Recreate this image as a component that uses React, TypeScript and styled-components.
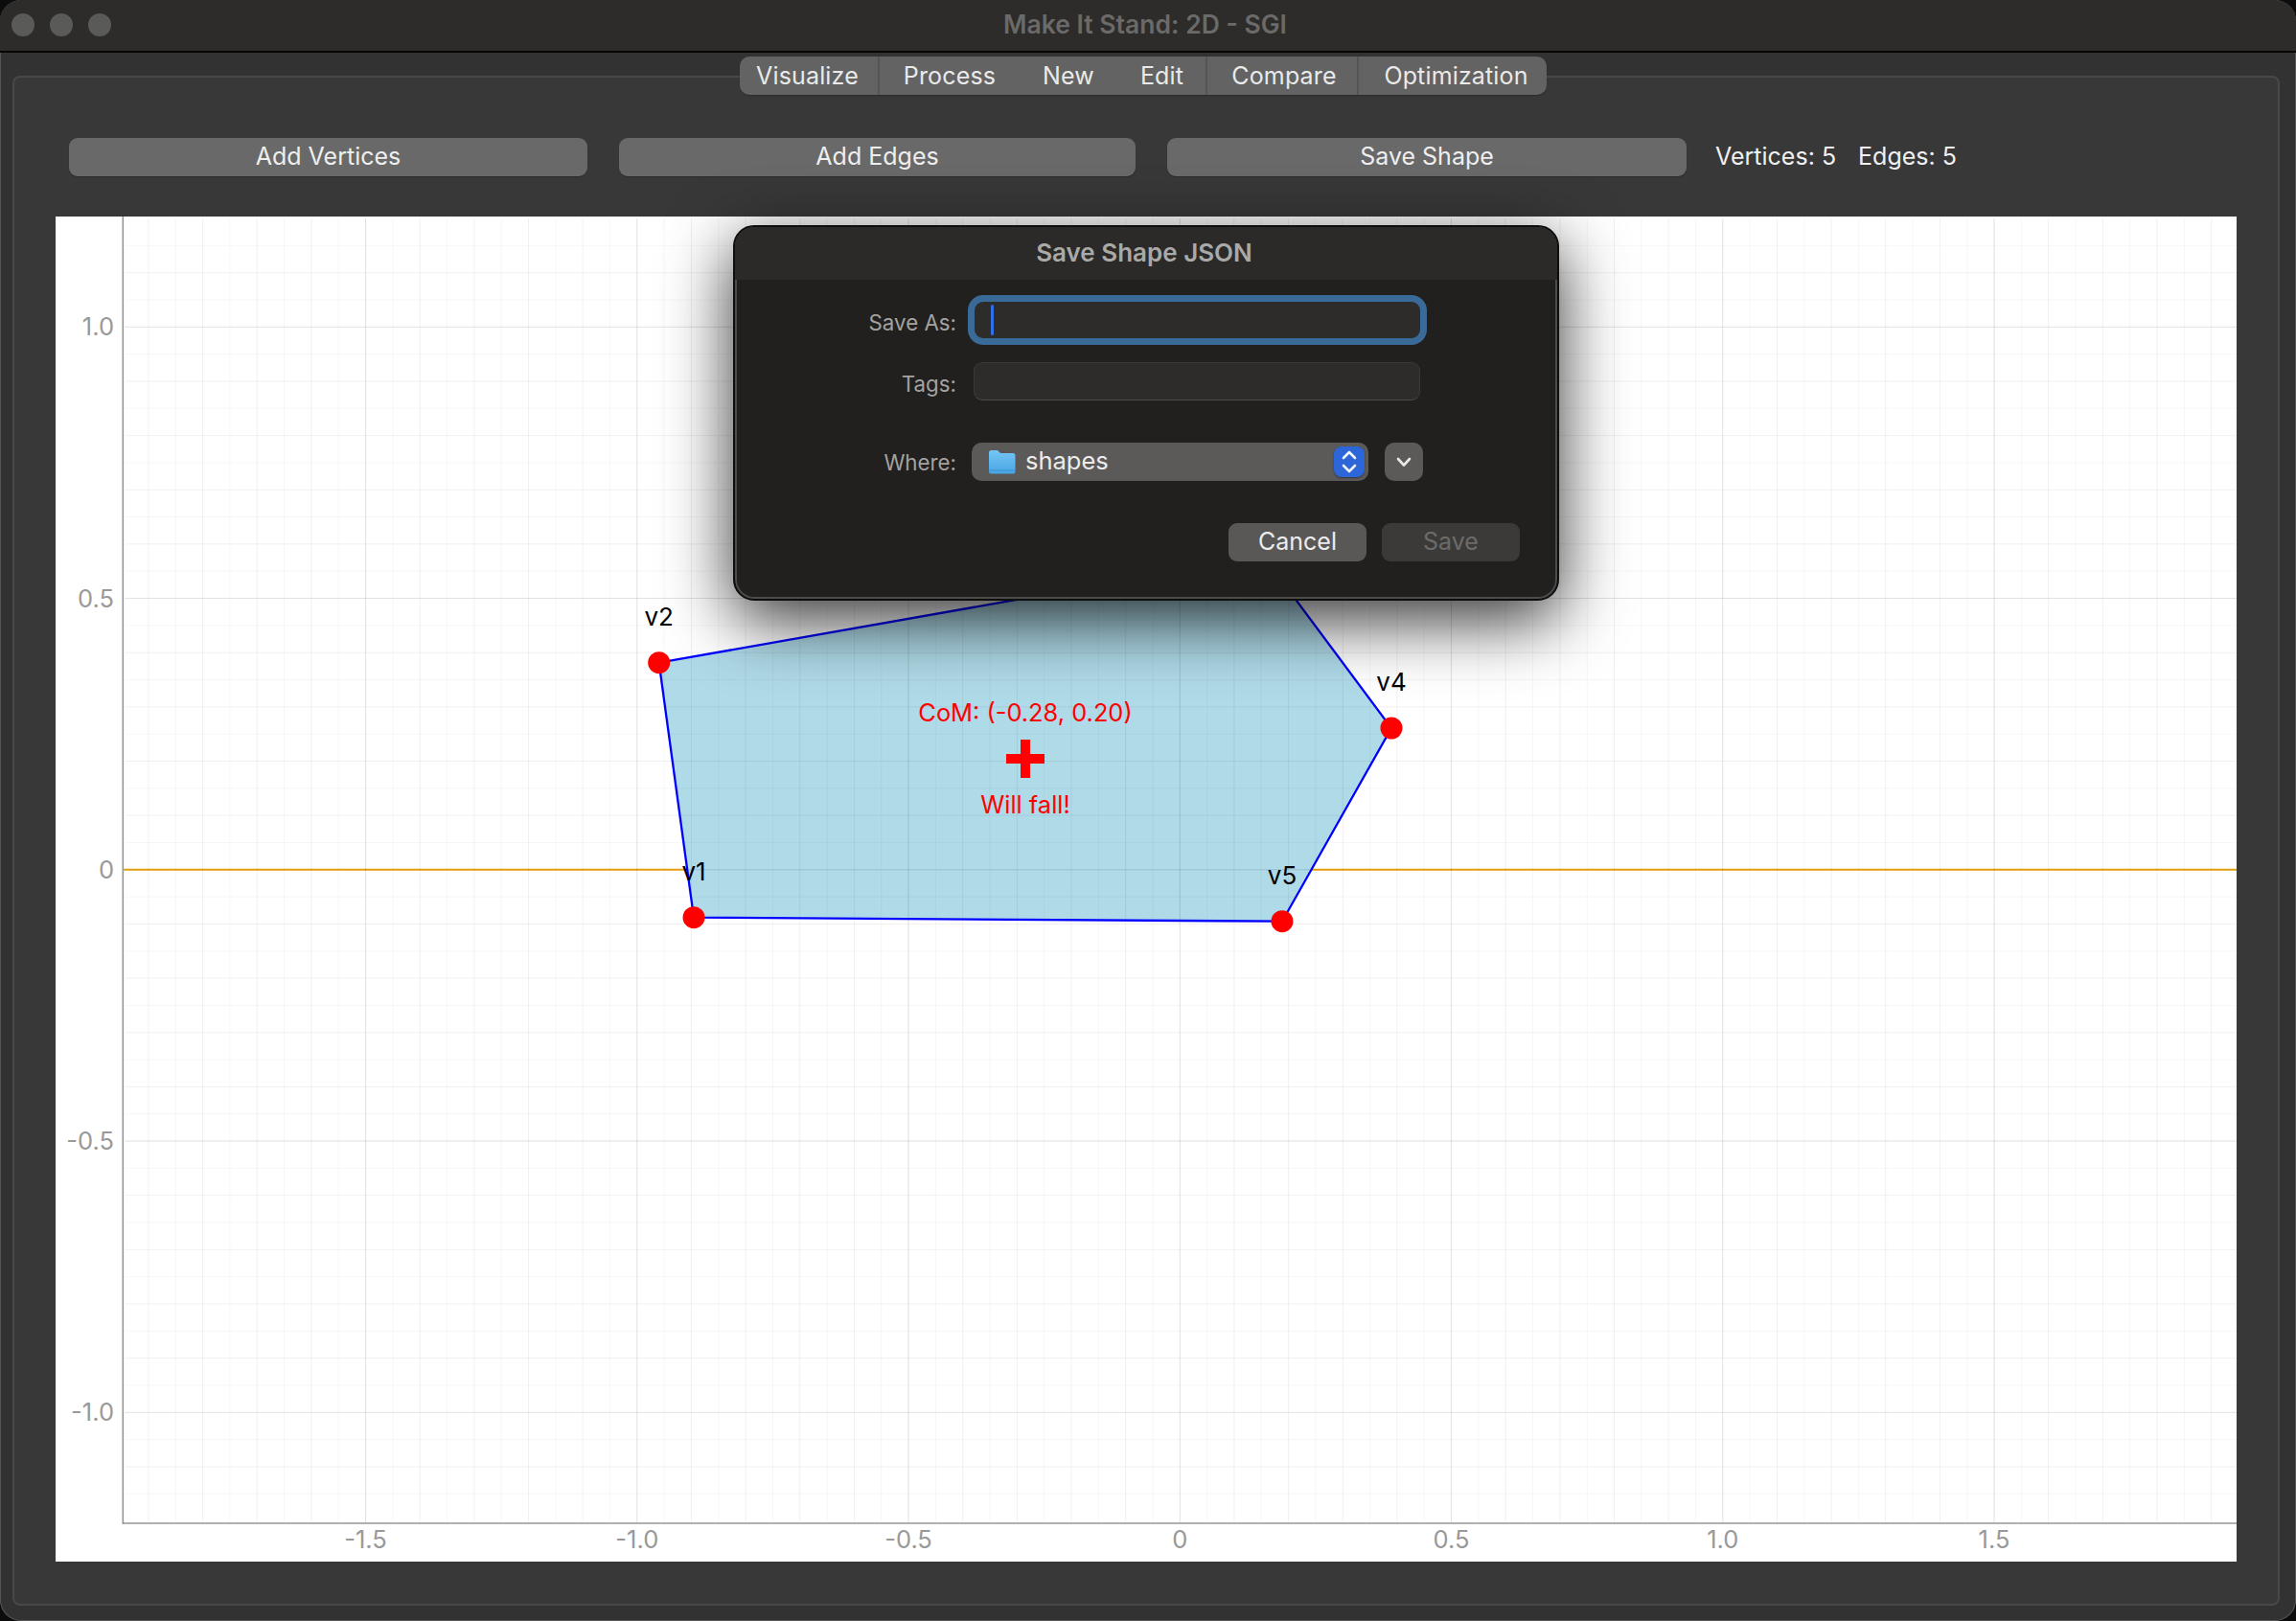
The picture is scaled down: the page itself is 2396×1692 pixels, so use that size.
import React from 'react';
import styled, { createGlobalStyle } from 'styled-components';

const FONT = '"Inter", "Liberation Sans", sans-serif';

const GlobalStyle = createGlobalStyle`
  html, body {
    margin: 0;
    padding: 0;
    background: #0c0c0c;
  }
  #root {
    width: 2396px;
    height: 1692px;
  }
`;

const Window = styled.div`
  position: relative;
  width: 2396px;
  height: 1692px;
  box-sizing: border-box;
  display: flex;
  flex-direction: column;
  overflow: hidden;
  background: #323232;
  border-radius: 22px;
  box-shadow: inset 0 0 0 1px #555;
  font-family: ${FONT};
`;

const TitleBar = styled.div`
  position: relative;
  flex: 0 0 55px;
  box-sizing: border-box;
  display: flex;
  align-items: center;
  gap: 16px;
  padding: 0 0 1px 12px;
  background: #2d2c2a;
  border-bottom: 2px solid #050505;
`;

const Light = styled.span`
  width: 24px;
  height: 24px;
  border-radius: 50%;
  background: #5a5a58;
`;

const WindowTitle = styled.div`
  position: absolute;
  left: 0;
  right: 6px;
  top: 10px;
  text-align: center;
  color: #6a6a68;
  font-size: 26.5px;
  font-weight: 600;
  line-height: 30px;
`;

const Group = styled.div`
  margin: 24px 17px 0 13px;
  height: 1597px;
  box-sizing: border-box;
  display: flex;
  flex-direction: column;
  padding: 0 44px 0 43px;
  background: #383838;
  border: 2px solid #484848;
  border-radius: 8px;
`;

const TabBar = styled.div`
  position: relative;
  display: flex;
  align-self: flex-start;
  margin: -22px 0 0 714px;
  height: 40px;
  width: 842px;
  box-sizing: border-box;
  background: #636363;
  border-radius: 10px;
  box-shadow: 0 1px 1px rgba(0, 0, 0, 0.25);
`;

const Tab = styled.div<{ $width: number; $divider?: boolean; $left?: number; $right?: number }>`
  width: ${p => p.$width}px;
  box-sizing: border-box;
  display: flex;
  align-items: center;
  justify-content: center;
  padding: 0 ${p => p.$right ?? 0}px 0 ${p => p.$left ?? 0}px;
  color: #eaeaea;
  font-size: 25px;
  letter-spacing: 0.15px;
  border-right: ${p => (p.$divider ? '2px solid #555' : 'none')};
`;

const Toolbar = styled.div`
  display: flex;
  align-items: center;
  gap: 33px;
  margin: 45px 0 0 14px;
  height: 40px;
`;

const ToolButton = styled.button<{ $width: number }>`
  width: ${p => p.$width}px;
  height: 40px;
  padding: 0 0 3px;
  border: none;
  border-radius: 9px;
  background: #696969;
  color: #eee;
  font-family: ${FONT};
  font-size: 25px;
  box-shadow: 0 1px 1px rgba(0, 0, 0, 0.25);
`;

const Counts = styled.div`
  display: flex;
  gap: 23px;
  margin: 0 0 3px -3px;
  color: #f0f0f0;
  font-size: 25px;
`;

const Plot = styled.div`
  margin-top: 42px;
  width: 2276px;
  height: 1404px;
  background: #fff;
`;

const ChartSvg = styled.svg`
  display: block;
  width: 100%;
  height: 100%;
  font-family: ${FONT};
`;

const Dialog = styled.div`
  position: absolute;
  left: 765px;
  top: 235px;
  width: 862px;
  height: 392px;
  box-sizing: border-box;
  display: flex;
  flex-direction: column;
  background: #21201e;
  border: 2px solid #0e0e0e;
  border-radius: 22px;
  overflow: hidden;
  box-shadow: inset 0 0 0 2px #4c4c4a, 0 20px 70px rgba(0, 0, 0, 0.8);
`;

const DialogTitle = styled.div`
  flex: 0 0 55px;
  box-sizing: border-box;
  display: flex;
  align-items: center;
  justify-content: center;
  padding: 0 4px 3px 0;
  background: #2b2a28;
  color: #a9a9a7;
  font-size: 26px;
  font-weight: 600;
`;

const Form = styled.div`
  display: flex;
  flex-direction: column;
`;

const Row = styled.div<{ $top: number }>`
  display: flex;
  align-items: center;
  margin-top: ${p => p.$top}px;
`;

const FieldLabel = styled.div<{ $drop?: number; }>`
  width: 231px;
  padding-top: ${p => p.$drop ?? 0}px;
  text-align: right;
  color: #a3a3a1;
  font-size: 22.3px;
`;

const FocusInput = styled.div`
  width: 465px;
  height: 38px;
  margin-left: 19px;
  box-sizing: border-box;
  padding: 3px 0 0 17px;
  background: #2d2c2b;
  border-radius: 9px;
  box-shadow: 0 0 0 7px #3a6a98;
`;

const Caret = styled.div`
  width: 3px;
  height: 32px;
  background: #2f6fe8;
  border-radius: 2px;
`;

const TagsInput = styled.div`
  width: 466px;
  height: 40px;
  margin-left: 18px;
  box-sizing: border-box;
  background: #2d2c2b;
  border: 1px solid #3a3937;
  border-bottom-color: #4d4c4a;
  border-radius: 9px;
`;

const Select = styled.div`
  width: 414px;
  height: 40px;
  margin-left: 16px;
  box-sizing: border-box;
  display: flex;
  align-items: center;
  padding: 0 4px 0 17px;
  background: #5b5a58;
  border-radius: 10px;
  color: #ececec;
  font-size: 25.5px;
`;

const SelectText = styled.span`
  flex: 1;
  margin: 0 0 3px 10px;
`;

const Stepper = styled.span`
  width: 32px;
  height: 32px;
  display: flex;
  align-items: center;
  justify-content: center;
  background: #2c66d8;
  border-radius: 8px;
  box-shadow: 0 1px 2px rgba(0, 0, 0, 0.4);
`;

const ChevronButton = styled.div`
  width: 40px;
  height: 40px;
  margin-left: 17px;
  display: flex;
  align-items: center;
  justify-content: center;
  background: #5b5a58;
  border-radius: 10px;
`;

const Actions = styled.div`
  display: flex;
  justify-content: flex-end;
  gap: 16px;
  margin-top: 44px;
  padding-right: 39px;
`;

const DialogButton = styled.div<{ $disabled?: boolean }>`
  width: 144px;
  height: 40px;
  box-sizing: border-box;
  display: flex;
  align-items: center;
  justify-content: center;
  padding-bottom: 3px;
  border-radius: 9px;
  background: ${p => (p.$disabled ? '#3b3a39' : '#595857')};
  color: ${p => (p.$disabled ? '#6c6b6a' : '#ececec')};
  font-size: 25px;
`;

// chart coordinates, relative to the plot's top left corner
const UNIT = 566.5;
const X0 = 1173.3;
const Y0 = 681.8;
const AXIS_X = 70.3;
const AXIS_Y = 1364;
const RIGHT = 2276;
const TOP = 2;

const px = (v: number) => X0 + v * UNIT;
const py = (v: number) => Y0 - v * UNIT;

// grid runs in steps of 0.05
const gridSteps = (limit: number) => {
  const out: number[] = [];
  for (let i = -limit; i <= limit; i++) out.push(i);
  return out;
};

const gridOpacity = (i: number) => {
  if (i % 10 === 0) return 0.12;
  if (i % 2 === 0) return 0.06;
  return 0.035;
};

const vertices: [string, number, number][] = [
  ['v1', 666, 731.7],
  ['v2', 629.7, 465.7],
  ['v3', 1260.5, 354.6],
  ['v4', 1394, 534],
  ['v5', 1280, 735.7],
];

const xTicks = ['-1.5', '-1.0', '-0.5', '0', '0.5', '1.0', '1.5'];
const yTicks = ['1.0', '0.5', '0', '-0.5', '-1.0'];

const Chart: React.FC = () => {
  const outline = vertices.map(v => `${v[1]},${v[2]}`).join(' ');
  return (
    <ChartSvg viewBox="0 0 2276 1404">
      <line x1={AXIS_X} x2={RIGHT} y1={Y0} y2={Y0} stroke="#f5a80f" strokeWidth={2} />
      <polygon points={outline} fill="#afdae8" />
      {gridSteps(38).map(i => (
        <line key={`v${i}`} x1={px(i * 0.05)} x2={px(i * 0.05)} y1={TOP} y2={AXIS_Y - 1} stroke="#000" strokeOpacity={gridOpacity(i)} strokeWidth={1} />
      ))}
      {gridSteps(23).map(i => (
        <line key={`h${i}`} x1={AXIS_X + 2} x2={RIGHT} y1={py(i * 0.05)} y2={py(i * 0.05)} stroke="#000" strokeOpacity={gridOpacity(i)} strokeWidth={1} />
      ))}
      <line x1={AXIS_X} x2={AXIS_X} y1={0} y2={AXIS_Y + 1} stroke="#969696" strokeWidth={1.6} />
      <line x1={AXIS_X} x2={RIGHT} y1={AXIS_Y} y2={AXIS_Y} stroke="#969696" strokeWidth={1.6} />
      <polygon points={outline} fill="none" stroke="#0000ff" strokeWidth={2.3} />
      {vertices.map(v => (
        <g key={v[0]}>
          <circle cx={v[1]} cy={v[2]} r={11.5} fill="#ff0000" />
          <text x={v[1]} y={v[2] - 39} textAnchor="middle" fontSize={26} fill="#000">{v[0]}</text>
        </g>
      ))}
      <text x={1012} y={527} textAnchor="middle" fontSize={25.4} fill="#ff0000">CoM: (-0.28, 0.20)</text>
      <rect x={992} y={561} width={40} height={10} fill="#ff0000" />
      <rect x={1007} y={546} width={10} height={40} fill="#ff0000" />
      <text x={1012} y={623} textAnchor="middle" fontSize={25.4} fill="#ff0000">Will fall!</text>
      {xTicks.map(t => (
        <text key={t} x={px(parseFloat(t))} y={1390} textAnchor="middle" fontSize={25.5} fill="#999">{t}</text>
      ))}
      {yTicks.map(t => (
        <text key={t} x={61} y={py(parseFloat(t)) + 9} textAnchor="end" fontSize={25.5} fill="#999">{t}</text>
      ))}
    </ChartSvg>
  );
};

const FolderIcon: React.FC = () => (
  <svg width="29" height="26" viewBox="0 0 29 26">
    <defs>
      <linearGradient id="folder" x1="0" y1="0" x2="0" y2="1">
        <stop offset="0" stopColor="#74c6f5" />
        <stop offset="1" stopColor="#4aa4e4" />
      </linearGradient>
    </defs>
    <path d="M1 3.5Q1 1 3.5 1H10L13 4H26Q28.500 4 28.500 6.500V23Q28.500 25.500 26 25.500H3.500Q1 25.500 1 23Z" fill="url(#folder)" />
    <path d="M1 22H28.500" stroke="#3f93d2" strokeWidth={1} />
  </svg>
);

const StepperIcon: React.FC = () => (
  <svg width="18" height="26" viewBox="0 0 18 26" fill="none" stroke="#eef3fc" strokeWidth={2.6} strokeLinecap="round" strokeLinejoin="round">
    <path d="M3 9L9 3L15 9" />
    <path d="M3 17L9 23L15 17" />
  </svg>
);

const ChevronIcon: React.FC = () => (
  <svg width="16" height="11" viewBox="0 0 16 11" fill="none" stroke="#e8e8e8" strokeWidth={2.6} strokeLinecap="round" strokeLinejoin="round">
    <path d="M2 2L8 8.500L14 2" />
  </svg>
);

const App: React.FC = () => (
  <>
    <GlobalStyle />
    <Window>
      <TitleBar>
        <Light />
        <Light />
        <Light />
        <WindowTitle>Make It Stand: 2D - SGI</WindowTitle>
      </TitleBar>
      <Group>
        <TabBar>
          <Tab $width={146} $divider $right={3}>Visualize</Tab>
          <Tab $width={146}>Process</Tab>
          <Tab $width={102}>New</Tab>
          <Tab $width={94} $divider $left={1}>Edit</Tab>
          <Tab $width={158} $divider $left={4}>Compare</Tab>
          <Tab $width={196} $left={7}>Optimization</Tab>
        </TabBar>
        <Toolbar>
          <ToolButton $width={541}>Add Vertices</ToolButton>
          <ToolButton $width={539}>Add Edges</ToolButton>
          <ToolButton $width={542}>Save Shape</ToolButton>
          <Counts>
            <span>Vertices: 5</span>
            <span>Edges: 5</span>
          </Counts>
        </Toolbar>
        <Plot>
          <Chart />
        </Plot>
      </Group>
      <Dialog>
        <DialogTitle>Save Shape JSON</DialogTitle>
        <Form>
          <Row $top={23}>
            <FieldLabel $drop={4}>Save As:</FieldLabel>
            <FocusInput><Caret /></FocusInput>
          </Row>
          <Row $top={25}>
            <FieldLabel $drop={4}>Tags:</FieldLabel>
            <TagsInput />
          </Row>
          <Row $top={44}>
            <FieldLabel>Where:</FieldLabel>
            <Select>
              <FolderIcon />
              <SelectText>shapes</SelectText>
              <Stepper><StepperIcon /></Stepper>
            </Select>
            <ChevronButton><ChevronIcon /></ChevronButton>
          </Row>
        </Form>
        <Actions>
          <DialogButton>Cancel</DialogButton>
          <DialogButton $disabled>Save</DialogButton>
        </Actions>
      </Dialog>
    </Window>
  </>
);

export default App;
